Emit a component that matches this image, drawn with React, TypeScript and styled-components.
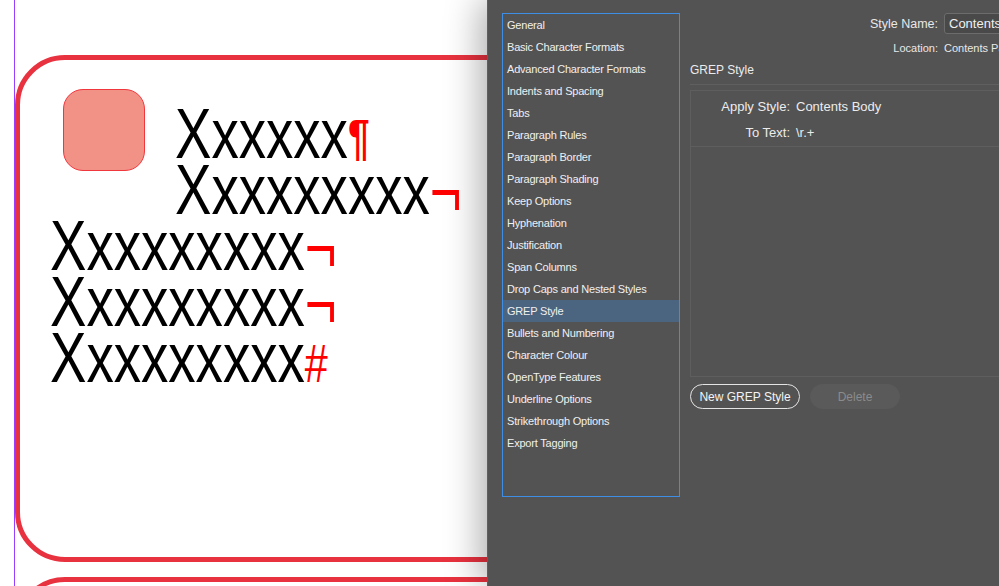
import React from "react";
import styled, { createGlobalStyle } from "styled-components";

const GlobalStyle = createGlobalStyle`
  html, body {
    margin: 0;
    padding: 0;
    overflow: hidden;
  }
  body {
    font-family: "Liberation Sans", Arial, sans-serif;
    background: #535353;
  }
`;

const Screen = styled.div`
  display: flex;
  width: 999px;
  height: 586px;
  overflow: hidden;
`;

// layout page on the left
const Canvas = styled.div`
  flex: none;
  width: 487px;
  height: 100%;
  box-sizing: border-box;
  padding-left: 14px;
  background: #fff;
  overflow: hidden;
`;

const MarginGuide = styled.div`
  height: 100%;
  box-sizing: border-box;
  border-left: 1px solid #9b3dff;
  padding-top: 55px;
  display: flex;
  flex-direction: column;
  gap: 15px;
`;

const TextFrame = styled.div`
  flex: none;
  width: 620px;
  height: 507px;
  box-sizing: border-box;
  border: 5px solid #e8323f;
  border-radius: 50px;
  padding: 29px 0 0 30px;
`;

const WrapBlock = styled.div`
  display: flex;
  align-items: flex-start;
`;

const DropShape = styled.div`
  flex: none;
  width: 82px;
  height: 82px;
  box-sizing: border-box;
  margin: 0 30px 0 13px;
  background: #f29186;
  border: 1px solid #f0373d;
  border-radius: 20px;
`;

const WrappedLines = styled.div`
  margin-top: 17px;
`;

const BigLine = styled.div`
  font-family: "Liberation Sans", Arial, sans-serif;
  font-size: 70px;
  line-height: 56px;
  height: 56px;
  color: #000;
  white-space: nowrap;
  transform: scaleX(0.78);
  transform-origin: left center;
`;

const Mark = styled.span<{ $kind: "para" | "line" | "end" }>`
  color: #ff0000;
  line-height: 0;
  font-weight: ${(p) => (p.$kind === "para" ? 700 : 400)};
  font-size: ${(p) =>
    p.$kind === "line" ? "70px" : p.$kind === "end" ? "53px" : "50px"};
  vertical-align: ${(p) =>
    p.$kind === "para" ? "3px" : p.$kind === "line" ? "-2px" : "0"};
`;

// dialog panel on the right
const Panel = styled.div`
  flex: 1;
  position: relative;
  z-index: 1;
  display: flex;
  gap: 10px;
  padding: 13px 0 0 14px;
  background: #535353;
  border-left: 1px solid #5f5f5f;
  box-shadow: -6px 0 34px rgba(0, 0, 0, 0.33);
  overflow: hidden;
`;

const CategoryList = styled.ul`
  flex: none;
  width: 178px;
  height: 484px;
  box-sizing: border-box;
  margin: 0;
  padding: 0;
  list-style: none;
  border: 1px solid #3f8ee6;
`;

const CategoryItem = styled.li<{ $selected?: boolean }>`
  height: 22px;
  line-height: 22px;
  padding-left: 4px;
  font-size: 11px;
  letter-spacing: -0.2px;
  color: #f0f0f0;
  white-space: nowrap;
  background: ${(p) => (p.$selected ? "#4b6580" : "transparent")};
`;

const Settings = styled.div`
  flex: none;
  width: 420px;
  display: flex;
  flex-direction: column;
`;

const HeaderGrid = styled.div`
  display: grid;
  grid-template-columns: 248px 1fr;
  column-gap: 6px;
  row-gap: 7px;
  align-items: center;
  color: #e8e8e8;

  .label {
    text-align: right;
    white-space: nowrap;
  }

  .label--name {
    font-size: 12.5px;
  }

  .small {
    font-size: 11px;
    line-height: 14px;
    white-space: nowrap;
  }
`;

const NameInput = styled.div`
  height: 21px;
  box-sizing: border-box;
  padding: 0 4px;
  border: 1px solid #6c6c6c;
  border-radius: 3px;
  background: #494949;
  font-size: 13px;
  line-height: 19px;
  color: #f0f0f0;
  white-space: nowrap;
`;

const SectionTitle = styled.div`
  margin-top: 8px;
  padding-bottom: 7px;
  border-bottom: 1px solid #5f5f5f;
  font-size: 12px;
  line-height: 14px;
  color: #ececec;
`;

const RuleBox = styled.div`
  margin-top: 5px;
  height: 287px;
  box-sizing: border-box;
  border: 1px solid #5e5e5e;
`;

const RuleFields = styled.div`
  display: grid;
  grid-template-columns: 99px 1fr;
  column-gap: 6px;
  padding-top: 3px;
  border-bottom: 1px solid #5e5e5e;
  font-size: 13px;
  line-height: 26px;
  color: #ececec;

  span:nth-child(odd) {
    text-align: right;
  }
`;

const ButtonRow = styled.div`
  display: flex;
  gap: 10px;
  margin-top: 7px;
`;

const PillButton = styled.div<{ $disabled?: boolean }>`
  height: 25px;
  width: ${(p) => (p.$disabled ? "90px" : "110px")};
  box-sizing: border-box;
  display: flex;
  align-items: center;
  justify-content: center;
  border-radius: 13px;
  border: 1px solid ${(p) => (p.$disabled ? "#5a5a5a" : "#e4e4e4")};
  background: ${(p) => (p.$disabled ? "#5a5a5a" : "transparent")};
  color: ${(p) => (p.$disabled ? "#8b8b8b" : "#f4f4f4")};
  font-size: 12px;
`;

const categories = [
  "General",
  "Basic Character Formats",
  "Advanced Character Formats",
  "Indents and Spacing",
  "Tabs",
  "Paragraph Rules",
  "Paragraph Border",
  "Paragraph Shading",
  "Keep Options",
  "Hyphenation",
  "Justification",
  "Span Columns",
  "Drop Caps and Nested Styles",
  "GREP Style",
  "Bullets and Numbering",
  "Character Colour",
  "OpenType Features",
  "Underline Options",
  "Strikethrough Options",
  "Export Tagging",
];

const App: React.FC = () => {
  return (
    <>
      <GlobalStyle />
      <Screen>
        <Canvas>
          <MarginGuide>
            <TextFrame>
              <WrapBlock>
                <DropShape />
                <WrappedLines>
                  <BigLine>
                    Xxxxxx<Mark $kind='para'>¶</Mark>
                  </BigLine>
                  <BigLine>
                    Xxxxxxxxx<Mark $kind='line'>¬</Mark>
                  </BigLine>
                </WrappedLines>
              </WrapBlock>
              <BigLine>
                Xxxxxxxxx<Mark $kind='line'>¬</Mark>
              </BigLine>
              <BigLine>
                Xxxxxxxxx<Mark $kind='line'>¬</Mark>
              </BigLine>
              <BigLine>
                Xxxxxxxxx<Mark $kind='end'>#</Mark>
              </BigLine>
            </TextFrame>
            <TextFrame />
          </MarginGuide>
        </Canvas>
        <Panel>
          <CategoryList>
            {categories.map((c) => (
              <CategoryItem key={c} $selected={c === "GREP Style"}>
                {c}
              </CategoryItem>
            ))}
          </CategoryList>
          <Settings>
            <HeaderGrid>
              <span className='label label--name'>Style Name:</span>
              <NameInput>Contents Paragraph</NameInput>
              <span className='label small'>Location:</span>
              <span className='small'>Contents Paragraph Styles</span>
            </HeaderGrid>
            <SectionTitle>GREP Style</SectionTitle>
            <RuleBox>
              <RuleFields>
                <span>Apply Style:</span>
                <span>Contents Body</span>
                <span>To Text:</span>
                <span>\r.+</span>
              </RuleFields>
            </RuleBox>
            <ButtonRow>
              <PillButton>New GREP Style</PillButton>
              <PillButton $disabled>Delete</PillButton>
            </ButtonRow>
          </Settings>
        </Panel>
      </Screen>
    </>
  );
};

export default App;
